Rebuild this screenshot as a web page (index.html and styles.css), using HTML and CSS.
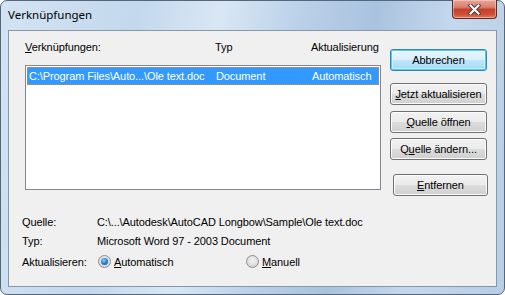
FILE: index.html
```html
<!doctype html>
<html lang="de">
    <head>
        <meta charset="utf-8">
        <title>Verknüpfungen</title>
        <link rel="stylesheet" href="styles.css">
    </head>

    <body>
        <div class = "window">
            <div class = "titlebar">
                <span class = "title">Verknüpfungen</span>
                <div class = "close">
                    <svg width="13" height="11" viewBox="0 0 13 11">
                        <path d="M2.5 1.5 L10.5 9.5 M10.5 1.5 L2.5 9.5" stroke="#4b3c3c" stroke-width="4" stroke-linecap="square"/>
                        <path d="M2.5 1.5 L10.5 9.5 M10.5 1.5 L2.5 9.5" stroke="#ffffff" stroke-width="2" stroke-linecap="square"/>
                    </svg>
                </div>
            </div>

            <div class = "client">
                <div class = "main">
                    <div class = "links">
                        <div class = "cols Head">
                            <span><u>V</u>erknüpfungen:</span>
                            <span>Typ</span>
                            <span>Aktualisierung</span>
                        </div>
                        <div class = "listbox">
                            <div class = "cols Item Selected">
                                <span>C:\Program Files\Auto...\Ole text.doc</span>
                                <span>Document</span>
                                <span>Automatisch</span>
                            </div>
                        </div>
                    </div>

                    <div class = "buttons">
                        <div class = "btn Default">Abbrechen</div>
                        <div class = "btn Update"><u>J</u>etzt aktualisieren</div>
                        <div class = "btn Open"><u>Q</u>uelle öffnen</div>
                        <div class = "btn Change">Q<u>u</u>elle ändern...</div>
                        <div class = "btn Remove"><u>E</u>ntfernen</div>
                    </div>
                </div>

                <div class = "info">
                    <span>Quelle:</span>
                    <span>C:\...\Autodesk\AutoCAD Longbow\Sample\Ole text.doc</span>
                    <span>Typ:</span>
                    <span>Microsoft Word 97 - 2003 Document</span>
                    <span class = "Last">Aktualisieren:</span>
                    <div class = "Last radios">
                        <span class = "radio Auto"><i class = "dot Checked"></i><u>A</u>utomatisch</span>
                        <span class = "radio"><i class = "dot"></i><u>M</u>anuell</span>
                    </div>
                </div>
            </div>
        </div>
    </body>
</html>
```

FILE: styles.css
```css
html{
    font-size: 11px;
    font-family: "Liberation Sans", Arial, sans-serif;
    letter-spacing: -0.1px;
}
body{
    margin: 0;
    background: #ffffff;
}
u{
    text-underline-offset: 1px;
}
.window{
    box-sizing: border-box;
    width: 505px;
    height: 295px;
    padding: 0 7px 7px 7px;
    border: 1px solid #55677b;
    border-radius: 7px;

    display: flex;
    flex-direction: column;
    background: linear-gradient(100deg, #d3e3f3 0%, #c3d8ed 25%, #d9e7f5 40%, #b9d0e8 55%, #a9c3df 68%, #c4d8ed 82%, #b7cee7 100%);
}
.titlebar{
    height: 29px;
    display: flex;
    align-items: flex-start;
}
.title{
    margin-top: 6px;
    font-family: "Noto Sans", sans-serif;
    font-size: 11.5px;
    line-height: 16px;
    letter-spacing: 0;
    color: #000000;
}
.close{
    box-sizing: border-box;
    width: 45px;
    height: 19px;
    margin-left: auto;
    margin-top: -1px;
    border: 1px solid #5c2b24;
    border-top: none;
    border-radius: 0 0 4px 4px;

    display: flex;
    justify-content: center;
    align-items: center;
    background: linear-gradient(#e7a697 0%, #d98070 40%, #c4412b 52%, #cf4f35 80%, #e07a5a 100%);
    box-shadow: inset 0 0 0 1px rgba(255, 220, 210, 0.5);
}
.client{
    flex: 1;
    border: 1px solid #8797a8;
    background: #f0f0f0;
    color: #000000;
}
.main{
    display: flex;
    padding: 9px 0 0 16px;
}
.links{
    width: 356px;
}
.cols{
    display: grid;
    grid-template-columns: 190px 96px 1fr;
    white-space: nowrap;
}
.Head{
    height: 14px;
    line-height: 14px;
    margin-bottom: 11px;
}
.listbox{
    box-sizing: border-box;
    height: 125px;
    border: 1px solid #828790;
    background: #ffffff;
    padding: 1px;
}
.Item{
    height: 18px;
    line-height: 18px;
    padding-left: 2px;
    grid-template-columns: 187px 96px 1fr;
}
.Selected{
    background: #3399ff;
    color: #ffffff;
    outline: 1px dotted #d98a3a;
    outline-offset: -1px;
}
.buttons{
    display: flex;
    flex-direction: column;
    margin-left: 9px;
    padding-top: 9px;
}
.btn{
    box-sizing: border-box;
    width: 97px;
    height: 22px;
    border: 1px solid #707070;
    border-radius: 3px;

    display: flex;
    justify-content: center;
    align-items: center;
    background: linear-gradient(#f2f2f2 0%, #ebebeb 50%, #dddddd 51%, #cfcfcf 100%);
    box-shadow: inset 0 0 0 1px #fcfcfc;
}
.Default{
    border-color: #3c7fb1;
    background: linear-gradient(#eaf6fd 0%, #d9f0fc 50%, #bee6fd 51%, #a7d9f5 100%);
    box-shadow: inset 0 0 0 1px #48d3fb, inset 0 0 0 2px rgba(255, 255, 255, 0.4);
}
.Update{
    margin-top: 12px;
}
.Open{
    margin-top: 6px;
}
.Change{
    margin-top: 5px;
}
.Remove{
    margin-top: 14px;
    margin-left: 3px;
    width: 95px;
}
.info{
    display: grid;
    grid-template-columns: 75px 1fr;
    grid-auto-rows: 19px;
    align-items: center;
    margin-top: 16px;
    padding-left: 13px;
    white-space: nowrap;
}
.Last{
    margin-top: 4px;
}
.radios{
    display: flex;
    align-items: center;
}
.radio{
    display: flex;
    align-items: center;
}
.Auto{
    width: 148px;
}
.dot{
    box-sizing: border-box;
    width: 13px;
    height: 13px;
    margin-left: 1px;
    margin-right: 3px;
    border: 1px solid #8e8f8f;
    border-radius: 50%;

    display: flex;
    justify-content: center;
    align-items: center;
    background: radial-gradient(circle at 50% 40%, #f4f4f4 0%, #dcdcdc 60%, #c9c9c9 100%);
}
.Checked::after{
    content: "";
    width: 7px;
    height: 7px;
    border-radius: 50%;
    background: radial-gradient(circle at 40% 35%, #8ad0f8 0%, #2a7fcc 50%, #0c4e94 100%);
}
```
